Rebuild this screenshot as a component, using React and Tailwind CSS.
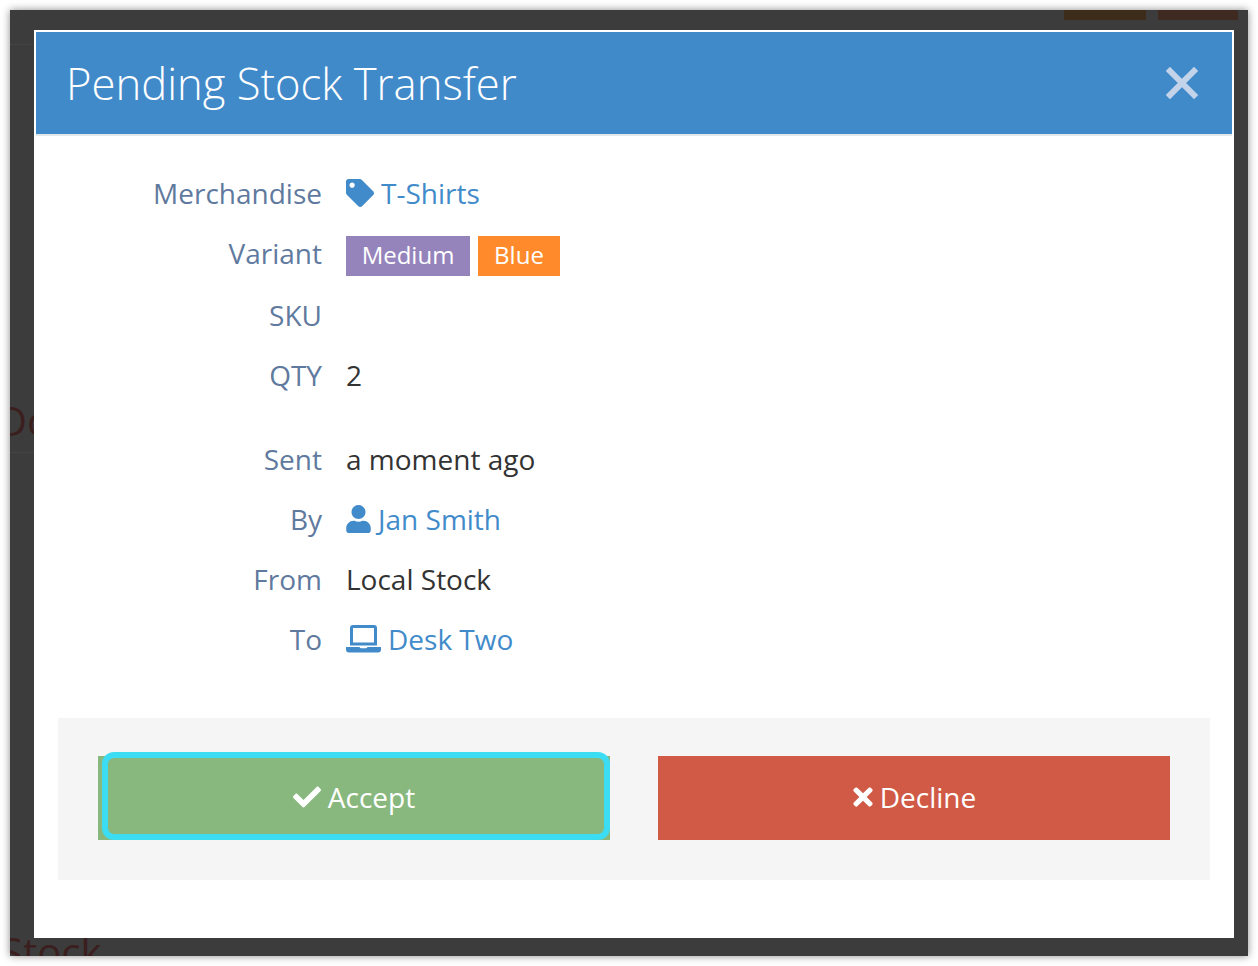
// pending stock transfer modal over a dimmed page
import React from 'react';
import { FaTag, FaUser, FaCheck, FaTimes } from 'react-icons/fa';

const labelClass = 'w-[286px] shrink-0 text-right text-[#5f7a9e]';

const Row = ({ label, className = 'h-[60px]', children }) => (
    <div className={`flex items-center ${className}`}>
        <div className={labelClass}>{label}</div>
        <div className="ml-[24px] flex items-center text-[#333333]">{children}</div>
    </div>
);

const LaptopIcon = () => (
    <svg width="35" height="28" viewBox="0 0 35 28" fill="#428bca" className="mr-[7px]">
        <path fillRule="evenodd" d="M7 0h21a3 3 0 0 1 3 3v17.500h-27v-17.500a3 3 0 0 1 3-3zM7 3v14.500h21v-14.500z" />
        <path d="M0 22h13.500c.4.800 1.200 1.300 2 1.300h4c.8 0 1.600-.5 2-1.300h13.500v2.500a3 3 0 0 1-3 3h-29a3 3 0 0 1-3-3z" />
    </svg>
);

const App = () => {
    return (
        <div className="w-[1258px] h-[966px] p-[10px] bg-white font-['Open_Sans',sans-serif] text-[28px]">
            <div className="relative w-[1238px] h-[946px] overflow-hidden bg-[#3c3c3c] px-[24px] pt-[20px] shadow-[0_0_8px_rgba(0,0,0,0.45)]">
                {/* page behind the overlay */}
                <div className="absolute left-[1054px] top-0 w-[82px] h-[10px] bg-[#3e2c1b]" />
                <div className="absolute left-[1148px] top-0 w-[80px] h-[10px] bg-[#3e2a20]" />
                <div className="absolute left-0 top-[34px] w-[24px] border-t border-dotted border-[#4a4a4a]" />
                <div className="absolute left-0 top-[442px] w-[24px] border-t border-[#444444]" />
                <div className="absolute left-[-12px] top-[383px] text-[40px] leading-[56px] text-[#3b1f1f]">Do</div>
                <div className="absolute left-[-9px] top-[914px] text-[40px] leading-[56px] text-[#3b1f1f]">Stock</div>

                <div className="relative w-[1200px] h-[908px] bg-white border-2 border-white">
                    <div className="flex items-center justify-between h-[102px] bg-[#418aca] pl-[30px] pr-[34px]">
                        <h2 className="text-[43.6px] font-light leading-none text-white pt-[2px]">Pending Stock Transfer</h2>
                        <svg width="32" height="32" viewBox="0 0 32 32" stroke="#c3d4ea" strokeWidth="6" strokeLinecap="square">
                            <path d="M4 4l24 24M28 4l-24 24" />
                        </svg>
                    </div>
                    <div className="h-[2px] bg-[#e3e8ea]" />

                    <div className="pt-[27px]">
                        <Row label="Merchandise">
                            <a className="flex items-center text-[#428bca]">
                                <FaTag className="mr-[7px] w-[28px] h-[28px]" />
                                T-Shirts
                            </a>
                        </Row>
                        <Row label="Variant" className="h-[62px] pb-[2px]">
                            <span className="flex items-center justify-center w-[124px] h-[40px] mt-[6px] pb-[2px] bg-[#9584bb] text-white text-[24px]">Medium</span>
                            <span className="flex items-center justify-center w-[82px] h-[40px] mt-[6px] pb-[2px] ml-[8px] bg-[#ff8a2b] text-white text-[24px]">Blue</span>
                        </Row>
                        <Row label="SKU" />
                        <Row label="QTY">2</Row>
                        <div className="h-[24px]" />
                        <Row label="Sent">a moment ago</Row>
                        <Row label="By">
                            <a className="flex items-center text-[#428bca]">
                                <FaUser className="mr-[7px] w-[25px] h-[28px]" />
                                Jan Smith
                            </a>
                        </Row>
                        <Row label="From">Local Stock</Row>
                        <Row label="To">
                            <a className="flex items-center text-[#428bca]">
                                <LaptopIcon />
                                Desk Two
                            </a>
                        </Row>
                    </div>

                    <div className="mx-[22px] mt-[49px] flex gap-[48px] bg-[#f5f5f5] px-[40px] py-[38px] h-[162px]">
                        <button className="relative flex-1 flex items-center justify-center h-[84px] pb-[2px] bg-[#89b87f] text-white">
                            <span className="absolute left-[4px] right-0 top-[-4px] bottom-0 rounded-[12px] border-[6px] border-[#3cdcf2]" />
                            <FaCheck className="mr-[7px] w-[28px] h-[28px]" />
                            Accept
                        </button>
                        <button className="flex-1 flex items-center justify-center h-[84px] pb-[2px] bg-[#d05a45] text-white">
                            <FaTimes className="mr-[6px] w-[22px] h-[28px]" />
                            Decline
                        </button>
                    </div>
                </div>
            </div>
        </div>
    );
};

export default App;
